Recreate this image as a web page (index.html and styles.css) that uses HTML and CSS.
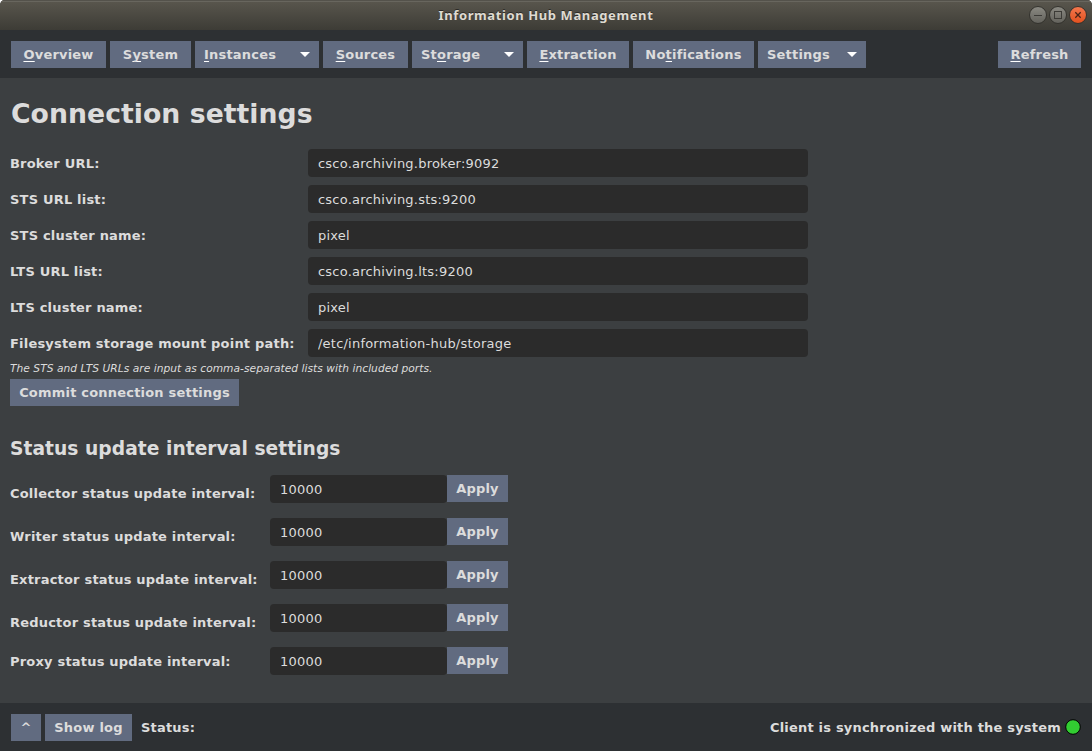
FILE: index.html
```html
<!DOCTYPE html>
<html lang="en">
<head>
<meta charset="utf-8">
<title>Information Hub Management</title>
<link rel="stylesheet" href="styles.css">
</head>
<body>
<div class="window">
  <header class="titlebar">
    <span class="title">Information Hub Management</span>
    <div class="controls">
      <svg width="60" height="20" viewBox="0 0 60 20">
        <defs>
          <linearGradient id="gray" x1="0" y1="0" x2="0" y2="1"><stop offset="0" stop-color="#8b8a83"/><stop offset="1" stop-color="#62615b"/></linearGradient>
          <linearGradient id="red" x1="0" y1="0" x2="0" y2="1"><stop offset="0" stop-color="#f4784f"/><stop offset="1" stop-color="#e2501d"/></linearGradient>
        </defs>
        <g stroke="#33322d">
          <circle cx="10" cy="10" r="8.5" fill="url(#gray)"/>
          <circle cx="30" cy="10" r="8.5" fill="url(#gray)"/>
          <circle cx="50" cy="10" r="8.5" fill="url(#red)"/>
        </g>
        <g fill="none" stroke="#3c3b37">
          <path d="M6 10.5h8"/>
          <rect x="26.5" y="6.5" width="7" height="7"/>
          <path d="M47.3 7.3l5.4 5.4M52.7 7.3l-5.4 5.4" stroke="#4a2418" stroke-width="1.3"/>
        </g>
      </svg>
    </div>
  </header>
  <nav class="toolbar">
    <button class="btn overview"><u>O</u>verview</button>
    <button class="btn system">S<u>y</u>stem</button>
    <button class="btn menu instances"><span><u>I</u>nstances</span><i class="arrow"></i></button>
    <button class="btn sources"><u>S</u>ources</button>
    <button class="btn menu storage"><span>St<u>o</u>rage</span><i class="arrow"></i></button>
    <button class="btn extraction"><u>E</u>xtraction</button>
    <button class="btn notifications">No<u>t</u>ifications</button>
    <button class="btn menu settings"><span>Settings</span><i class="arrow"></i></button>
    <button class="btn refresh"><u>R</u>efresh</button>
  </nav>
  <main class="content">
    <h1>Connection settings</h1>
    <div class="connection">
      <label>Broker URL:</label><input value="csco.archiving.broker:9092">
      <label>STS URL list:</label><input value="csco.archiving.sts:9200">
      <label>STS cluster name:</label><input value="pixel">
      <label>LTS URL list:</label><input value="csco.archiving.lts:9200">
      <label>LTS cluster name:</label><input value="pixel">
      <label>Filesystem storage mount point path:</label><input value="/etc/information-hub/storage">
    </div>
    <p class="hint">The STS and LTS URLs are input as comma-separated lists with included ports.</p>
    <button class="btn commit">Commit connection settings</button>
    <h2>Status update interval settings</h2>
    <div class="intervals">
      <div class="interval"><label>Collector status update interval:</label><input value="10000"><button class="btn apply">Apply</button></div>
      <div class="interval"><label>Writer status update interval:</label><input value="10000"><button class="btn apply">Apply</button></div>
      <div class="interval"><label>Extractor status update interval:</label><input value="10000"><button class="btn apply">Apply</button></div>
      <div class="interval"><label>Reductor status update interval:</label><input value="10000"><button class="btn apply">Apply</button></div>
      <div class="interval last"><label>Proxy status update interval:</label><input value="10000"><button class="btn apply">Apply</button></div>
    </div>
  </main>
  <footer class="statusbar">
    <button class="btn expand">^</button>
    <button class="btn log">Show log</button>
    <span class="status">Status:</span>
    <span class="sync">Client is synchronized with the system</span>
    <svg class="led" width="16" height="16" viewBox="0 0 16 16"><circle cx="8" cy="8" r="7.3" fill="#32cd32" stroke="#000"/></svg>
  </footer>
</div>
</body>
</html>
```
FILE: styles.css
```css
* { box-sizing: border-box; }
body {
  margin: 0;
  background: #fff;
  color: #dcdcdc;
  font: bold 13px/16px "DejaVu Sans", sans-serif;
  letter-spacing: 0.2px;
}
.window {
  display: flex;
  flex-direction: column;
  width: 1092px;
  height: 751px;
  overflow: hidden;
  border-radius: 5px 5px 0 0;
  background: #3c3f41;
}
.titlebar {
  display: grid;
  grid-template-columns: 1fr auto 1fr;
  align-items: center;
  height: 30px;
  padding: 0 4px;
  background: linear-gradient(#5a574e, #3d3c36);
  box-shadow: inset 0 1px #54524b, inset 0 2px #68665e;
}
.title {
  grid-column: 2;
  color: #dfdbd2;
  font: bold 13px/20px "Noto Sans", sans-serif;
  letter-spacing: 0.6px;
  text-shadow: 0 -1px #2b2a26;
}
.controls { display: flex; justify-content: flex-end; }
.toolbar {
  display: flex;
  gap: 4px;
  height: 48px;
  padding: 11px 11px 0;
  background: #2d3033;
}
.btn {
  height: 27px;
  flex: none;
  padding: 0;
  border: 0;
  background: #616b80;
  color: #dcdcdc;
  font: inherit;
  letter-spacing: inherit;
  text-align: center;
  white-space: nowrap;
}
.btn u {
  text-decoration: underline 1px #fff;
  text-underline-offset: 2px;
  text-decoration-skip-ink: none;
}
.menu {
  display: flex;
  align-items: center;
  justify-content: space-between;
  padding: 0 9px;
}
.arrow {
  border: 5px solid transparent;
  border-top-color: #fff;
  border-bottom: 0;
}
.overview { width: 95px; }
.system { width: 81px; }
.instances { width: 124px; }
.sources { width: 85px; }
.storage { width: 111px; }
.extraction { width: 102px; }
.notifications { width: 121px; }
.settings { width: 108px; }
.refresh { width: 83px; margin-left: auto; }
.content { flex: 1; padding: 18px 10px 0; }
h1 { margin: 0 0 18px 1px; font-size: 26.667px; line-height: 35px; letter-spacing: 0.05px; }
h2 { margin: 32px 0 15px; font-size: 18.667px; line-height: 22px; letter-spacing: 0.04px; }
.connection {
  display: grid;
  grid-template-columns: 298px 500px;
  row-gap: 8px;
  align-items: center;
}
.connection label { padding-top: 2px; }
input {
  width: 100%;
  height: 28px;
  padding: 0 10px;
  border: 0;
  border-radius: 4px;
  background: #2b2b2b;
  color: #dcdcdc;
  font: 13px "DejaVu Sans", sans-serif;
  letter-spacing: 0.22px;
}
.hint {
  margin: 5px 0 3px;
  font: italic 10.667px/14px "DejaVu Sans", sans-serif;
  letter-spacing: 0.033px;
}
.commit { display: block; width: 229px; }
.intervals { display: flex; flex-direction: column; gap: 15px; }
.interval {
  display: grid;
  grid-template-columns: 260px 177px 61px;
  height: 28px;
}
.interval label { padding-top: 11px; }
.interval.last label { padding-top: 7px; }
.statusbar {
  display: flex;
  align-items: center;
  height: 48px;
  padding: 1px 11px 0;
  background: #2d3033;
}
.expand { width: 30px; margin-right: 4px; }
.log { width: 87px; margin-right: 9px; }
.sync { margin-left: auto; margin-right: 4px; }
.led { margin-bottom: 1px; }
```
